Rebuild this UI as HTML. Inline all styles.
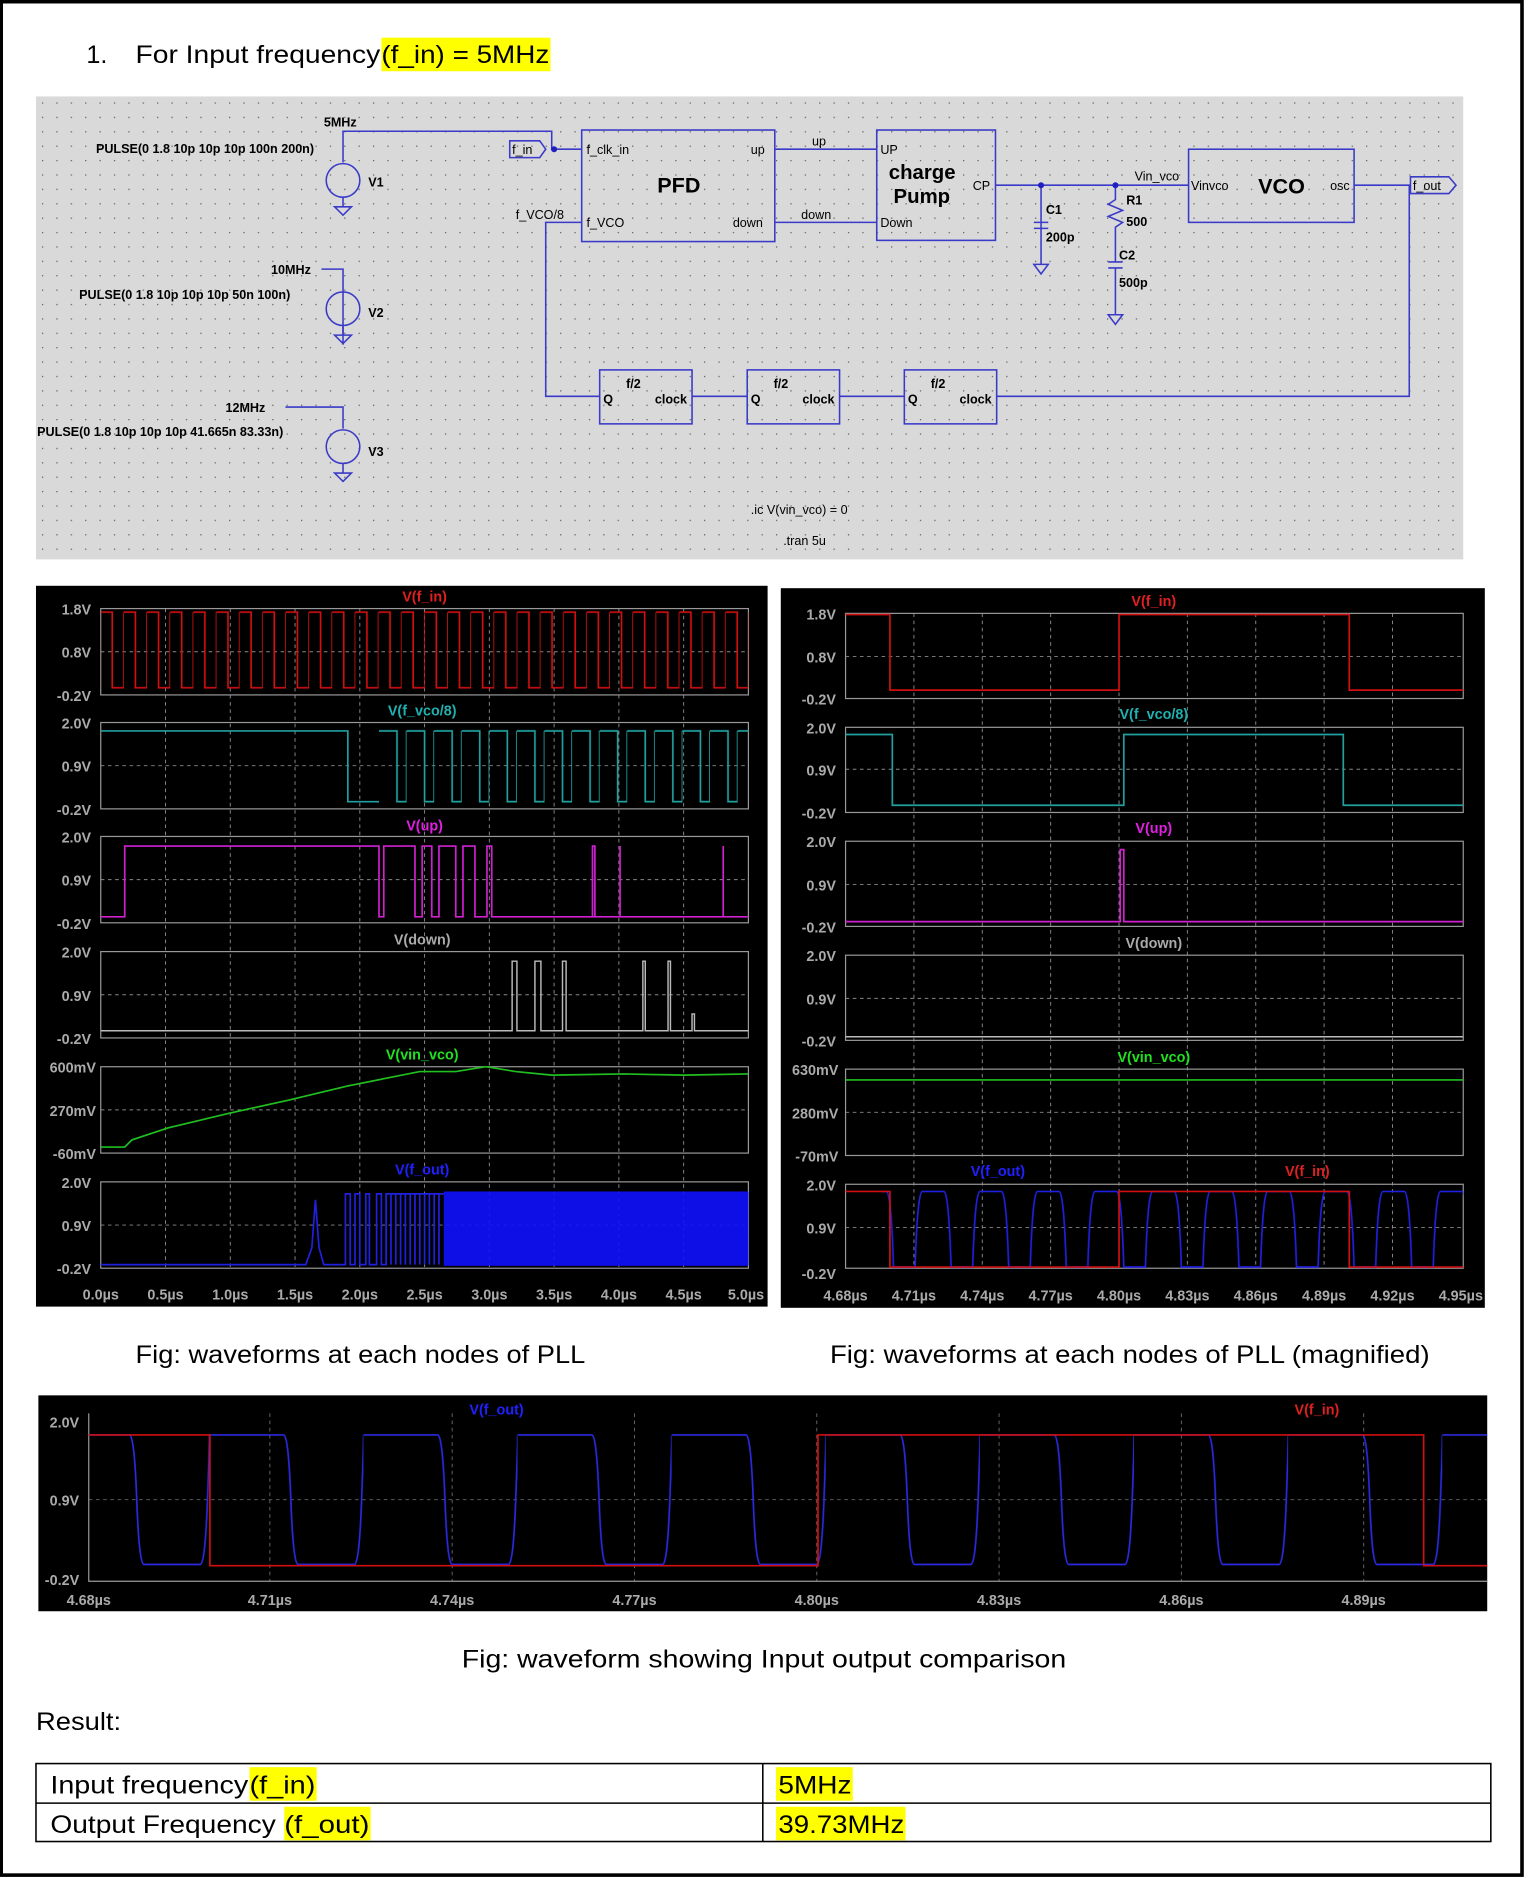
<!DOCTYPE html>
<html><head><meta charset="utf-8"><style>
html,body{margin:0;padding:0;background:#fff;width:1528px;height:1878px;overflow:hidden}
svg{display:block}
.ax{font-family:"Liberation Sans",sans-serif;font-weight:bold;font-size:12px;fill:#aaa}
.doc{font-family:"Liberation Sans",sans-serif;font-size:21px;fill:#000}
.sc{font-family:"Liberation Sans",sans-serif;font-weight:bold;font-size:10.5px;fill:#000}
</style></head><body>
<svg width="1528" height="1878" viewBox="0 0 1274 1565" xmlns="http://www.w3.org/2000/svg">
<defs>
<pattern id="dots" x="30" y="80" width="12" height="12" patternUnits="userSpaceOnUse"><rect x="5" y="5" width="1" height="1" fill="#555"/></pattern>
<pattern id="fin" x="84" y="0" width="19.3" height="1565" patternUnits="userSpaceOnUse"><path d="M0 510H9.6V573H19.3V510" stroke="#d01010" stroke-width="1.4" fill="none"/></pattern>
<pattern id="vco8" x="316" y="0" width="23" height="1565" patternUnits="userSpaceOnUse"><path d="M0 609H15V668H23V609" stroke="#20a0a0" stroke-width="1.4" fill="none"/></pattern>
<pattern id="fo" x="705" y="0" width="48" height="1565" patternUnits="userSpaceOnUse"><path d="M0 1056H10Q12 993 16 993H34Q38 993 40 1056H48" stroke="#2020e0" stroke-width="1.4" fill="none"/></pattern>
<pattern id="fob" x="46" y="0" width="128.5" height="1565" patternUnits="userSpaceOnUse"><path d="M0 1196H62Q66 1196 68 1250T74 1304H121Q125 1304 127 1250T128.5 1196" stroke="#2a2ae0" stroke-width="1.4" fill="none"/></pattern>
</defs>
<rect x="1" y="1" width="1268" height="1562" fill="none" stroke="#000" stroke-width="3"/>
<rect x="318" y="31" width="141" height="28" fill="#ffff00"/>
<text class="doc" x="72" y="52">1.</text>
<text class="doc" x="113" y="52" textLength="204" lengthAdjust="spacingAndGlyphs">For Input frequency</text>
<text class="doc" x="318" y="52" textLength="140" lengthAdjust="spacingAndGlyphs">(f_in) = 5MHz</text>
<rect x="30" y="80" width="1190" height="386" fill="#d9d9d9"/>
<rect x="30" y="80" width="1190" height="386" fill="url(#dots)"/>
<g stroke="#3a3ac8" stroke-width="1.3" fill="none">
<path d="M286 135V109H460V124H485"/>
<path d="M286 287V224H268"/><path d="M286 357V339H238"/>
<circle cx="286" cy="150" r="14"/><circle cx="286" cy="257" r="14"/><circle cx="286" cy="372" r="14"/>
<path d="M286 164V172M279 172H293L286 179Z"/><path d="M286 271V279M279 279H293L286 286Z"/><path d="M286 386V394M279 394H293L286 401Z"/>
<rect x="485" y="108" width="161" height="93"/>
<rect x="731" y="108" width="99" height="92"/>
<rect x="991" y="124" width="138" height="61"/>
<path d="M646 124H731M646 185H731"/>
<path d="M830 154H991M1129 154H1176"/>
<path d="M868 154V220M862 220H874L868 228Z"/>
<path d="M862 185H874M862 190H874"/>
<path d="M930 154V166L924 170L936 175L924 180L936 185L930 189V218M924 218H936M924 223H936M930 223V262M924 262H936L930 270Z"/>
<path d="M485 185H455V330H500"/>
<rect x="500" y="308" width="77" height="45"/><rect x="623" y="308" width="77" height="45"/><rect x="754" y="308" width="77" height="45"/>
<path d="M577 330H623M700 330H754M831 330H1175V154"/>
<path d="M425 117H450L455 124L450 131H425Z"/>
<path d="M1176 147H1208L1214 154L1208 161H1176Z"/>
</g>
<g fill="#2020c0"><circle cx="462" cy="124" r="2.5"/><circle cx="868" cy="154" r="2.5"/><circle cx="930" cy="154" r="2.5"/></g>
<g class="sc">
<text x="270" y="105">5MHz</text>
<text x="80" y="127">PULSE(0 1.8 10p 10p 10p 100n 200n)</text>
<text x="307" y="155">V1</text>
<text x="226" y="228">10MHz</text>
<text x="66" y="249">PULSE(0 1.8 10p 10p 10p 50n 100n)</text>
<text x="307" y="264">V2</text>
<text x="188" y="343">12MHz</text>
<text x="31" y="363">PULSE(0 1.8 10p 10p 10p 41.665n 83.33n)</text>
<text x="307" y="380">V3</text>
<text x="427" y="128" font-weight="normal">f_in</text>
<text x="489" y="128" font-weight="normal">f_clk_in</text>
<text x="626" y="128" font-weight="normal">up</text>
<text x="677" y="121" font-weight="normal">up</text>
<text x="430" y="182" font-weight="normal">f_VCO/8</text>
<text x="489" y="189" font-weight="normal">f_VCO</text>
<text x="611" y="189" font-weight="normal">down</text>
<text x="668" y="182" font-weight="normal">down</text>
<text x="548" y="160" font-size="18">PFD</text>
<text x="734" y="128" font-weight="normal">UP</text>
<text x="741" y="149" font-size="17">charge</text>
<text x="745" y="169" font-size="17">Pump</text>
<text x="734" y="189" font-weight="normal">Down</text>
<text x="811" y="158" font-weight="normal">CP</text>
<text x="946" y="150" font-weight="normal">Vin_vco</text>
<text x="993" y="158" font-weight="normal">Vinvco</text>
<text x="1049" y="161" font-size="18">VCO</text>
<text x="1109" y="158" font-weight="normal">osc</text>
<text x="1178" y="158" font-weight="normal">f_out</text>
<text x="872" y="178">C1</text><text x="872" y="201">200p</text>
<text x="939" y="170">R1</text><text x="939" y="188">500</text>
<text x="933" y="216">C2</text><text x="933" y="239">500p</text>
<text x="522" y="323">f/2</text><text x="645" y="323">f/2</text><text x="776" y="323">f/2</text>
<text x="503" y="336">Q</text><text x="546" y="336">clock</text>
<text x="626" y="336">Q</text><text x="669" y="336">clock</text>
<text x="757" y="336">Q</text><text x="800" y="336">clock</text>
<text x="626" y="428" font-weight="normal">.ic V(vin_vco) = 0</text>
<text x="653" y="454" font-weight="normal">.tran 5u</text>
</g>

<rect x="30" y="488" width="610" height="601" fill="#000"/>
<g stroke="#888" stroke-width="0.8" stroke-dasharray="3,3">
<path d="M138 507V1057M192 507V1057M246 507V1057M300 507V1057M354 507V1057M408 507V1057M462 507V1057M516 507V1057M570 507V1057"/>
<path d="M84 543H624M84 638H624M84 733H624M84 829H624M84 925H624M84 1021H624"/>
</g>
<g fill="none" stroke="#999" stroke-width="1">
<rect x="84" y="507" width="540" height="72"/><rect x="84" y="602" width="540" height="72"/><rect x="84" y="697" width="540" height="72"/><rect x="84" y="793" width="540" height="72"/><rect x="84" y="889" width="540" height="72"/><rect x="84" y="985" width="540" height="72"/>
</g>
<rect x="84" y="505" width="540" height="72" fill="url(#fin)"/>
<path d="M84 609H290V668H316" stroke="#20a0a0" stroke-width="1.4" fill="none"/>
<rect x="316" y="605" width="308" height="68" fill="url(#vco8)"/>
<path d="M84 764H104V705H316V764H320V705H346V764H352V705H360V764H366V705H380V764H386V705H396V764H406V705H410V764H624M494 764V705H496V764M517 764V705M603 764V705" stroke="#d020d0" stroke-width="1.4" fill="none"/>
<path d="M84 859H427V801H431V859H446V801H451V859H469V801H472V859H536V801H538V859H557V801H559V859H577V845H579V859H624" stroke="#bbb" stroke-width="1.2" fill="none"/>
<path d="M84 956H104L110 950L140 940L190 928L240 917L290 905L320 899L350 893L380 893L405 889L430 893L460 896L520 895L570 896L624 895" stroke="#20c020" stroke-width="1.4" fill="none"/>
<path d="M84 1054H255L260 1040L263 1000L266 1040L270 1054H288V995H292V1054H296V995H300V1054H305V995H308V1054H314V995H318V1054H322V995H370" stroke="#2020e0" stroke-width="1.4" fill="none"/>
<path d="M322 995V1054M326 995V1054M330 995V1054M334 995V1054M338 995V1054M342 995V1054M346 995V1054M350 995V1054M354 995V1054M358 995V1054M362 995V1054M366 995V1054" stroke="#2020e0" stroke-width="1.4"/>
<rect x="370" y="993" width="254" height="62" fill="#1010ff" opacity="0.9"/>
<g class="ax" text-anchor="end">
<text x="76" y="512">1.8V</text><text x="76" y="548">0.8V</text><text x="76" y="584">-0.2V</text>
<text x="76" y="607">2.0V</text><text x="76" y="643">0.9V</text><text x="76" y="679">-0.2V</text>
<text x="76" y="702">2.0V</text><text x="76" y="738">0.9V</text><text x="76" y="774">-0.2V</text>
<text x="76" y="798">2.0V</text><text x="76" y="834">0.9V</text><text x="76" y="870">-0.2V</text>
<text x="80" y="894">600mV</text><text x="80" y="930">270mV</text><text x="80" y="966">-60mV</text>
<text x="76" y="990">2.0V</text><text x="76" y="1026">0.9V</text><text x="76" y="1062">-0.2V</text>
</g>
<g class="ax" text-anchor="middle">
<text x="84" y="1083">0.0µs</text><text x="138" y="1083">0.5µs</text><text x="192" y="1083">1.0µs</text><text x="246" y="1083">1.5µs</text><text x="300" y="1083">2.0µs</text><text x="354" y="1083">2.5µs</text><text x="408" y="1083">3.0µs</text><text x="462" y="1083">3.5µs</text><text x="516" y="1083">4.0µs</text><text x="570" y="1083">4.5µs</text><text x="622" y="1083">5.0µs</text>
<text x="354" y="501" fill="#e02020">V(f_in)</text>
<text x="352" y="596" fill="#20b0b0">V(f_vco/8)</text>
<text x="354" y="692" fill="#e020e0">V(up)</text>
<text x="352" y="787" fill="#aaa">V(down)</text>
<text x="352" y="883" fill="#20e020">V(vin_vco)</text>
<text x="352" y="979" fill="#2020ff">V(f_out)</text>
</g>

<rect x="651" y="490" width="587" height="600" fill="#000"/>
<g stroke="#888" stroke-width="0.8" stroke-dasharray="3,3">
<path d="M762 511V1057M819 511V1057M876 511V1057M933 511V1057M990 511V1057M1047 511V1057M1104 511V1057M1161 511V1057"/>
<path d="M705 547H1220M705 641H1220M705 737H1220M705 832H1220M705 927H1220M705 1023H1220"/>
</g>
<g fill="none" stroke="#999" stroke-width="1">
<rect x="705" y="511" width="515" height="71"/><rect x="705" y="606" width="515" height="71"/><rect x="705" y="701" width="515" height="71"/><rect x="705" y="796" width="515" height="71"/><rect x="705" y="891" width="515" height="72"/><rect x="705" y="987" width="515" height="70"/>
</g>
<path d="M705 512H742V575H933V512H1125V575H1220" stroke="#d01010" stroke-width="1.4" fill="none"/>
<path d="M705 612H744V671H937V612H1120V671H1220" stroke="#20a0a0" stroke-width="1.4" fill="none"/>
<path d="M705 768H934V708H937V768H1220" stroke="#d020d0" stroke-width="1.4" fill="none"/>
<path d="M705 864H1220" stroke="#bbb" stroke-width="1.2"/>
<path d="M705 900H1220" stroke="#20c020" stroke-width="1.4"/>
<rect x="735" y="990" width="485" height="68" fill="url(#fo)"/>
<path d="M705 993H742V1056H933V993H1125V1056H1220" stroke="#d01010" stroke-width="1.4" fill="none"/>
<g class="ax" text-anchor="end">
<text x="697" y="516">1.8V</text><text x="697" y="552">0.8V</text><text x="697" y="587">-0.2V</text>
<text x="697" y="611">2.0V</text><text x="697" y="646">0.9V</text><text x="697" y="682">-0.2V</text>
<text x="697" y="706">2.0V</text><text x="697" y="742">0.9V</text><text x="697" y="777">-0.2V</text>
<text x="697" y="801">2.0V</text><text x="697" y="837">0.9V</text><text x="697" y="872">-0.2V</text>
<text x="699" y="896">630mV</text><text x="699" y="932">280mV</text><text x="699" y="968">-70mV</text>
<text x="697" y="992">2.0V</text><text x="697" y="1028">0.9V</text><text x="697" y="1066">-0.2V</text>
</g>
<g class="ax" text-anchor="middle">
<text x="705" y="1084">4.68µs</text><text x="762" y="1084">4.71µs</text><text x="819" y="1084">4.74µs</text><text x="876" y="1084">4.77µs</text><text x="933" y="1084">4.80µs</text><text x="990" y="1084">4.83µs</text><text x="1047" y="1084">4.86µs</text><text x="1104" y="1084">4.89µs</text><text x="1161" y="1084">4.92µs</text><text x="1218" y="1084">4.95µs</text>
<text x="962" y="505" fill="#e02020">V(f_in)</text>
<text x="962" y="599" fill="#20b0b0">V(f_vco/8)</text>
<text x="962" y="694" fill="#e020e0">V(up)</text>
<text x="962" y="790" fill="#aaa">V(down)</text>
<text x="962" y="885" fill="#20e020">V(vin_vco)</text>
<text x="832" y="980" fill="#2020ff">V(f_out)</text>
<text x="1090" y="980" fill="#e02020">V(f_in)</text>
</g>

<text class="doc" x="113" y="1136" textLength="375" lengthAdjust="spacingAndGlyphs">Fig: waveforms at each nodes of PLL</text>
<text class="doc" x="692" y="1136" textLength="500" lengthAdjust="spacingAndGlyphs">Fig: waveforms at each nodes of PLL (magnified)</text>

<rect x="32" y="1163" width="1208" height="180" fill="#000"/>
<g stroke="#666" stroke-width="0.8" stroke-dasharray="3,3">
<path d="M225 1178V1318M377 1178V1318M529 1178V1318M681 1178V1318M833 1178V1318M985 1178V1318M1137 1178V1318"/>
<path d="M74 1250H1240"/>
</g>
<path d="M74 1178V1318H1240" stroke="#999" fill="none"/>
<rect x="74" y="1190" width="1166" height="120" fill="url(#fob)"/>
<path d="M74 1196H175V1305H682V1196H1187V1305H1240" stroke="#d01010" stroke-width="1.4" fill="none"/>
<g class="ax" text-anchor="end">
<text x="66" y="1190">2.0V</text><text x="66" y="1255">0.9V</text><text x="66" y="1321">-0.2V</text>
</g>
<g class="ax" text-anchor="middle">
<text x="74" y="1338">4.68µs</text><text x="225" y="1338">4.71µs</text><text x="377" y="1338">4.74µs</text><text x="529" y="1338">4.77µs</text><text x="681" y="1338">4.80µs</text><text x="833" y="1338">4.83µs</text><text x="985" y="1338">4.86µs</text><text x="1137" y="1338">4.89µs</text>
<text x="414" y="1179" fill="#2020ff">V(f_out)</text>
<text x="1098" y="1179" fill="#e02020">V(f_in)</text>
</g>

<text class="doc" x="385" y="1390" textLength="504" lengthAdjust="spacingAndGlyphs">Fig: waveform showing Input output comparison</text>
<text class="doc" x="30" y="1442" textLength="71" lengthAdjust="spacingAndGlyphs">Result:</text>
<rect x="208" y="1473" width="56" height="28" fill="#ffff00"/>
<rect x="237" y="1506" width="72" height="28" fill="#ffff00"/>
<rect x="647" y="1473" width="64" height="28" fill="#ffff00"/>
<rect x="647" y="1506" width="108" height="28" fill="#ffff00"/>
<g stroke="#000" stroke-width="1.3" fill="none">
<rect x="30" y="1470" width="1213" height="65"/><path d="M30 1503H1243M636 1470V1535"/>
</g>
<text class="doc" x="42" y="1495" textLength="165" lengthAdjust="spacingAndGlyphs">Input frequency</text>
<text class="doc" x="208" y="1495" textLength="55" lengthAdjust="spacingAndGlyphs">(f_in)</text>
<text class="doc" x="42" y="1528" textLength="188" lengthAdjust="spacingAndGlyphs">Output Frequency</text>
<text class="doc" x="237" y="1528" textLength="71" lengthAdjust="spacingAndGlyphs">(f_out)</text>
<text class="doc" x="649" y="1495" textLength="61" lengthAdjust="spacingAndGlyphs">5MHz</text>
<text class="doc" x="649" y="1528" textLength="105" lengthAdjust="spacingAndGlyphs">39.73MHz</text>
</svg>
</body></html>
